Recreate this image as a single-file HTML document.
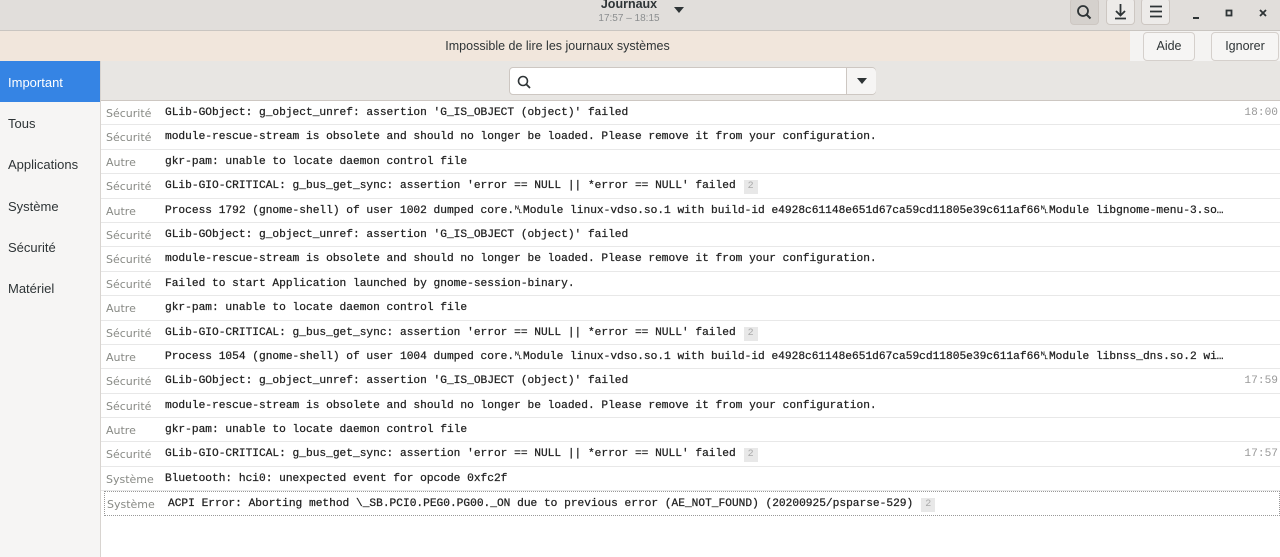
<!DOCTYPE html>
<html><head><meta charset="utf-8"><style>
*{margin:0;padding:0;box-sizing:border-box}
body{width:1280px;height:557px;overflow:hidden;background:#fff;font-family:"Liberation Sans",sans-serif;position:relative}
.hb{position:absolute;left:0;top:0;width:1280px;height:31px;background:#e1dedb;border-bottom:1px solid #c9c5c1}
.title{position:absolute;left:0;width:1258px;text-align:center;top:-3px;font-size:12.5px;font-weight:bold;color:#2e3436}
.sub{position:absolute;left:0;width:1258px;text-align:center;top:13px;font-size:10px;color:#8b8e8f}
.btn{position:absolute;top:-2px;width:29px;height:27px;border-radius:4px;background:#edebe9;border:1px solid #cdc7c2}
.ib{position:absolute;left:0;top:31px;width:1280px;height:30px;background:#f1e6dc}
.ib .t{position:absolute;left:0;width:1115px;text-align:center;top:8px;font-size:12.5px;color:#2e3436}
.ib .r{position:absolute;left:1130px;top:0;width:150px;height:30px;background:#f4f3f2}
.b2{position:absolute;top:32px;height:29px;border:1px solid #d5d0cc;border-radius:4px;background:#f6f5f4;font-size:12.5px;color:#2e3436;text-align:center;line-height:27px}
.side{position:absolute;left:0;top:61px;width:101px;height:496px;background:#f6f5f4;border-right:1px solid #d8d4d0}
.side div{height:41.2px;line-height:43px;padding-left:8px;font-size:13px;color:#2e3436}
.side .a{background:#3584e4;color:#fff}
.tb{position:absolute;left:101px;top:61px;width:1179px;height:40px;background:#e8e6e3;border-bottom:1px solid #cdc7c2}
.se{position:absolute;left:408px;top:6px;width:367px;height:28px;background:#fff;border:1px solid #cdc7c2;border-radius:4px}
.rows{position:absolute;left:101px;top:101px;width:1179px}
.row{height:24.4px;border-bottom:1px solid #e8e8e8;position:relative;font-family:"Liberation Mono",monospace;font-size:11.2px;color:#222;white-space:nowrap}
.row .c{position:absolute;left:5px;top:6px;color:#888a85;font-family:"DejaVu Sans","Liberation Sans",sans-serif;font-size:11px}
.row .m{position:absolute;left:64px;top:6px;-webkit-text-stroke:0.25px #222}
.row .tm{position:absolute;right:2px;top:6px;color:#999}
.n{display:inline-block;background:#e8e8e8;color:#aaa;padding:0 4px;margin-left:8px;font-size:10px;line-height:14px;-webkit-text-stroke:0}
</style></head><body>
<div class="hb">
<div class="title">Journaux</div><div class="sub">17:57 – 18:15</div>
<svg style="position:absolute;left:674px;top:7px" width="10" height="6"><path d="M0 0h10L5 6z" fill="#2e3436"/></svg>
<div class="btn" style="left:1070px;background:#d5d1cd"><svg width="27" height="25"><circle cx="12" cy="12" r="5" fill="none" stroke="#2e3436" stroke-width="1.8"/><path d="M15.5 15.5l4 4" stroke="#2e3436" stroke-width="2"/></svg></div>
<div class="btn" style="left:1106px"><svg width="27" height="25"><path d="M13.5 5v11M9 12l4.5 4.5L18 12M8 19.5h11" fill="none" stroke="#2e3436" stroke-width="1.8"/></svg></div>
<div class="btn" style="left:1141px"><svg width="27" height="25"><path d="M8 7.5h12M8 12.5h12M8 17.5h12" stroke="#2e3436" stroke-width="1.8"/></svg></div>
<svg style="position:absolute;left:1190px;top:5px" width="80" height="16"><path d="M3 13h6" stroke="#2e3436" stroke-width="2"/><rect x="36.5" y="5.5" width="5" height="5" fill="none" stroke="#2e3436" stroke-width="1.8"/><path d="M70 5l6 6M76 5l-6 6" stroke="#2e3436" stroke-width="1.8"/></svg>
</div>
<div class="ib"><div class="t">Impossible de lire les journaux systèmes</div><div class="r"></div></div>
<div class="b2" style="left:1143px;width:52px">Aide</div>
<div class="b2" style="left:1211px;width:68px">Ignorer</div>
<div class="side"><div class="a">Important</div><div>Tous</div><div>Applications</div><div>Système</div><div>Sécurité</div><div>Matériel</div></div>
<div class="tb"><div class="se"><svg style="position:absolute;left:6px;top:6px" width="16" height="16"><circle cx="7" cy="7" r="4.5" fill="none" stroke="#2e3436" stroke-width="1.6"/><path d="M10 10l4 4" stroke="#2e3436" stroke-width="1.8"/></svg><div style="position:absolute;left:336px;top:0;width:30px;height:26px;border-left:1px solid #cdc7c2;background:#f6f5f4;border-radius:0 4px 4px 0"><svg style="position:absolute;left:10px;top:10px" width="10" height="6"><path d="M0 0h10L5 6z" fill="#2e3436"/></svg></div></div></div>
<div class="rows">
<div class="row"><span class="c">Sécurité</span><span class="m">GLib-GObject: g_object_unref: assertion 'G_IS_OBJECT (object)' failed</span><span class="tm">18:00</span></div>
<div class="row"><span class="c">Sécurité</span><span class="m">module-rescue-stream is obsolete and should no longer be loaded. Please remove it from your configuration.</span></div>
<div class="row"><span class="c">Autre</span><span class="m">gkr-pam: unable to locate daemon control file</span></div>
<div class="row"><span class="c">Sécurité</span><span class="m">GLib-GIO-CRITICAL: g_bus_get_sync: assertion 'error == NULL || *error == NULL' failed<span class="n">2</span></span></div>
<div class="row"><span class="c">Autre</span><span class="m">Process 1792 (gnome-shell) of user 1002 dumped core.␤Module linux-vdso.so.1 with build-id e4928c61148e651d67ca59cd11805e39c611af66␤Module libgnome-menu-3.so…</span></div>
<div class="row"><span class="c">Sécurité</span><span class="m">GLib-GObject: g_object_unref: assertion 'G_IS_OBJECT (object)' failed</span></div>
<div class="row"><span class="c">Sécurité</span><span class="m">module-rescue-stream is obsolete and should no longer be loaded. Please remove it from your configuration.</span></div>
<div class="row"><span class="c">Sécurité</span><span class="m">Failed to start Application launched by gnome-session-binary.</span></div>
<div class="row"><span class="c">Autre</span><span class="m">gkr-pam: unable to locate daemon control file</span></div>
<div class="row"><span class="c">Sécurité</span><span class="m">GLib-GIO-CRITICAL: g_bus_get_sync: assertion 'error == NULL || *error == NULL' failed<span class="n">2</span></span></div>
<div class="row"><span class="c">Autre</span><span class="m">Process 1054 (gnome-shell) of user 1004 dumped core.␤Module linux-vdso.so.1 with build-id e4928c61148e651d67ca59cd11805e39c611af66␤Module libnss_dns.so.2 wi…</span></div>
<div class="row"><span class="c">Sécurité</span><span class="m">GLib-GObject: g_object_unref: assertion 'G_IS_OBJECT (object)' failed</span><span class="tm">17:59</span></div>
<div class="row"><span class="c">Sécurité</span><span class="m">module-rescue-stream is obsolete and should no longer be loaded. Please remove it from your configuration.</span></div>
<div class="row"><span class="c">Autre</span><span class="m">gkr-pam: unable to locate daemon control file</span></div>
<div class="row"><span class="c">Sécurité</span><span class="m">GLib-GIO-CRITICAL: g_bus_get_sync: assertion 'error == NULL || *error == NULL' failed<span class="n">2</span></span><span class="tm">17:57</span></div>
<div class="row"><span class="c">Système</span><span class="m">Bluetooth: hci0: unexpected event for opcode 0xfc2f</span></div>
<div class="row" style="border:1px dotted #999;margin-left:3px"><span class="c" style="left:2px">Système</span><span class="m" style="left:63px">ACPI Error: Aborting method \_SB.PCI0.PEG0.PG00._ON due to previous error (AE_NOT_FOUND) (20200925/psparse-529)<span class="n">2</span></span></div>
</div>
</body></html>
